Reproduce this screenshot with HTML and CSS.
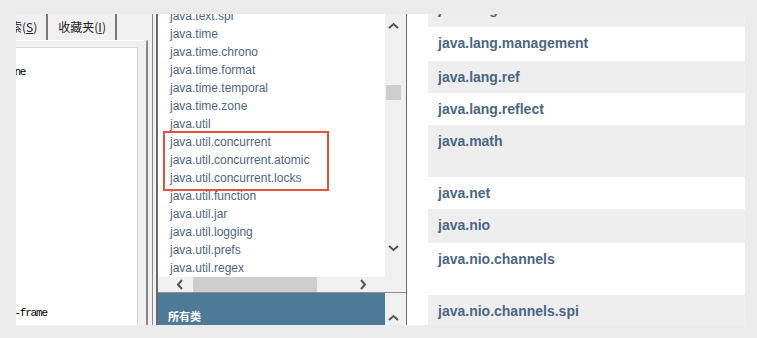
FILE: index.html
```html
<!DOCTYPE html>
<html>
<head lang="zh">
    <meta charset="UTF-8">
    <title>Java API</title>
    <link rel="stylesheet" href="styles.css">
</head>
<body>
    <div id="window">
        <div class="left">
            <div class="tabs">
                <div class="tab tab-first">搜索(<u>S</u>)</div>
                <div class="tab">收藏夹(<u>I</u>)</div>
            </div>
            <div class="frame">
                <div class="pane">
                    <div class="ln ln-top">one</div>
                    <div class="ln ln-bottom">t-frame</div>
                </div>
            </div>
        </div>

        <div class="splitter"></div>

        <div class="middle">
            <div class="upper">
                <div class="listcol">
                    <div class="list">
                        <ul class="list-inner">
                            <li>java.text.spi</li>
                            <li>java.time</li>
                            <li>java.time.chrono</li>
                            <li>java.time.format</li>
                            <li>java.time.temporal</li>
                            <li>java.time.zone</li>
                            <li>java.util</li>
                            <li>java.util.concurrent</li>
                            <li>java.util.concurrent.atomic</li>
                            <li>java.util.concurrent.locks</li>
                            <li>java.util.function</li>
                            <li>java.util.jar</li>
                            <li>java.util.logging</li>
                            <li>java.util.prefs</li>
                            <li>java.util.regex</li>
                        </ul>
                        <div class="mark"></div>
                    </div>
                    <div class="hscroll">
                        <svg class="arr-left" width="8" height="11" viewBox="0 0 8 11"><polyline points="6,1 2,5.5 6,10" fill="none" stroke="#555" stroke-width="2"/></svg>
                        <div class="hthumb"></div>
                        <svg class="arr-right" width="8" height="11" viewBox="0 0 8 11"><polyline points="2,1 6,5.5 2,10" fill="none" stroke="#555" stroke-width="2"/></svg>
                    </div>
                </div>
                <div class="vscroll">
                    <svg class="arr-up" width="11" height="7" viewBox="0 0 11 7"><polyline points="1,6 5.5,2 10,6" fill="none" stroke="#555" stroke-width="2"/></svg>
                    <div class="vthumb"></div>
                    <svg class="arr-down" width="11" height="7" viewBox="0 0 11 7"><polyline points="1,1 5.5,5 10,1" fill="none" stroke="#555" stroke-width="2"/></svg>
                </div>
            </div>
            <div class="lower">
                <div class="header">所有类</div>
                <div class="vscroll-low">
                    <svg class="arr-up" width="11" height="7" viewBox="0 0 11 7"><polyline points="1,6 5.5,2 10,6" fill="none" stroke="#555" stroke-width="2"/></svg>
                </div>
            </div>
        </div>

        <div class="spacer"></div>

        <div class="packages">
            <div class="pkg-inner">
                <div class="pkg h34">java.lang</div>
                <div class="pkg alt h34">java.lang.management</div>
                <div class="pkg">java.lang.ref</div>
                <div class="pkg alt">java.lang.reflect</div>
                <div class="pkg h52">java.math</div>
                <div class="pkg alt">java.net</div>
                <div class="pkg h34">java.nio</div>
                <div class="pkg alt h52">java.nio.channels</div>
                <div class="pkg">java.nio.channels.spi</div>
            </div>
        </div>
    </div>
</body>
</html>
```

FILE: styles.css
```css
*{
    margin: 0;
    padding: 0;
    box-sizing: border-box;
}
body{
    background: #ebebeb;
    font-family: "Liberation Sans", Arial, sans-serif;
}
#window{
    display: flex;
    height: 325px;
    padding-top: 14px;
    padding-left: 16px;
}

/* left: tabs + index pane */
.left{
    width: 132px;
    display: flex;
    flex-direction: column;
    background: #f0f0f0;
    overflow: hidden;
}
.tabs{
    display: flex;
    height: 26px;
    font-family: "Noto Sans CJK SC", sans-serif;
    font-size: 12px;
    color: #222;
}
.tab{
    line-height: 26px;
    padding: 0 9px 0 10px;
    border-right: 2px solid #7a7a7a;
    white-space: nowrap;
}
.tab-first{
    margin-left: -28px;
    padding-right: 9px;
}
.frame{
    flex: 1;
    border-top: 1px solid #fff;
    border-right: 2px solid #8a8a8a;
    padding: 6px 8px 0 0;
}
.pane{
    height: 100%;
    background: #fff;
    border-top: 1px solid #dcdcdc;
    border-right: 1px solid #d6d6d6;
    display: flex;
    flex-direction: column;
    justify-content: space-between;
    padding: 17px 0 5px;
    overflow: hidden;
    font-family: "Liberation Mono", monospace;
    font-size: 11px;
    line-height: 14px;
    letter-spacing: -1.2px;
    color: #000;
}
.ln-top{
    margin-left: -7px;
}
.ln-bottom{
    margin-left: -7px;
}

.splitter{
    width: 9px;
    border-left: 4px solid #f0f0f0;
    background: #f0f0f0;
    box-shadow: inset 1px 0 0 #8a8a8a, inset -1px 0 0 #6a6a6a;
}

/* middle: package list */
.middle{
    width: 250px;
    border-left: 1px solid #6a6a6a;
    border-right: 1px solid #6a6a6a;
    background: #f0f0f0;
    display: flex;
    flex-direction: column;
}
.upper{
    display: flex;
    height: 282px;
}
.listcol{
    width: 227px;
    display: flex;
    flex-direction: column;
}
.list{
    position: relative;
    height: 263px;
    background: #fff;
    overflow: hidden;
}
.list-inner{
    margin-top: -7px;
    list-style: none;
}
.list-inner li{
    font-size: 12px;
    line-height: 18px;
    padding-left: 12px;
    color: #4d6683;
    white-space: nowrap;
}
.mark{
    position: absolute;
    left: 5px;
    top: 117px;
    width: 166px;
    height: 60px;
    border: 2px solid #e8503e;
}
.hscroll{
    height: 15px;
    display: flex;
    align-items: center;
}
.arr-left{
    margin-left: 18px;
    margin-right: 9px;
}
.hthumb{
    width: 124px;
    height: 15px;
    background: #cdcdcd;
}
.arr-right{
    margin-left: 42px;
}
.vscroll{
    width: 21px;
    display: flex;
    flex-direction: column;
}
.vscroll .arr-up{
    margin: 8px 0 0 3px;
}
.vthumb{
    width: 15px;
    height: 15px;
    margin: 56px 0 0 1px;
    background: #cdcdcd;
}
.arr-down{
    margin: auto 0 40px 3px;
}
.lower{
    flex: 1;
    display: flex;
    border-top: 1px solid #8c8c8c;
}
.header{
    width: 227px;
    background: #4d7a97;
    color: #fff;
    font-family: "Noto Sans CJK SC", sans-serif;
    font-weight: bold;
    font-size: 11px;
    line-height: 14px;
    padding: 16px 0 0 10px;
}
.vscroll-low{
    width: 21px;
    overflow: hidden;
}
.vscroll-low .arr-up{
    margin: 21px 0 0 3px;
}

.spacer{
    width: 21px;
    background: #fff;
}

/* right: package summary */
.packages{
    width: 317px;
    background: #eeeeef;
    overflow: hidden;
}
.pkg-inner{
    margin-top: -21px;
}
.pkg{
    height: 32px;
    padding: 8px 10px 0;
    font-weight: bold;
    font-size: 14px;
    line-height: 16px;
    color: #4a6782;
    white-space: nowrap;
}
.pkg.alt{
    background: #fff;
}
.pkg.h34{
    height: 34px;
}
.pkg.h52{
    height: 52px;
}
```
